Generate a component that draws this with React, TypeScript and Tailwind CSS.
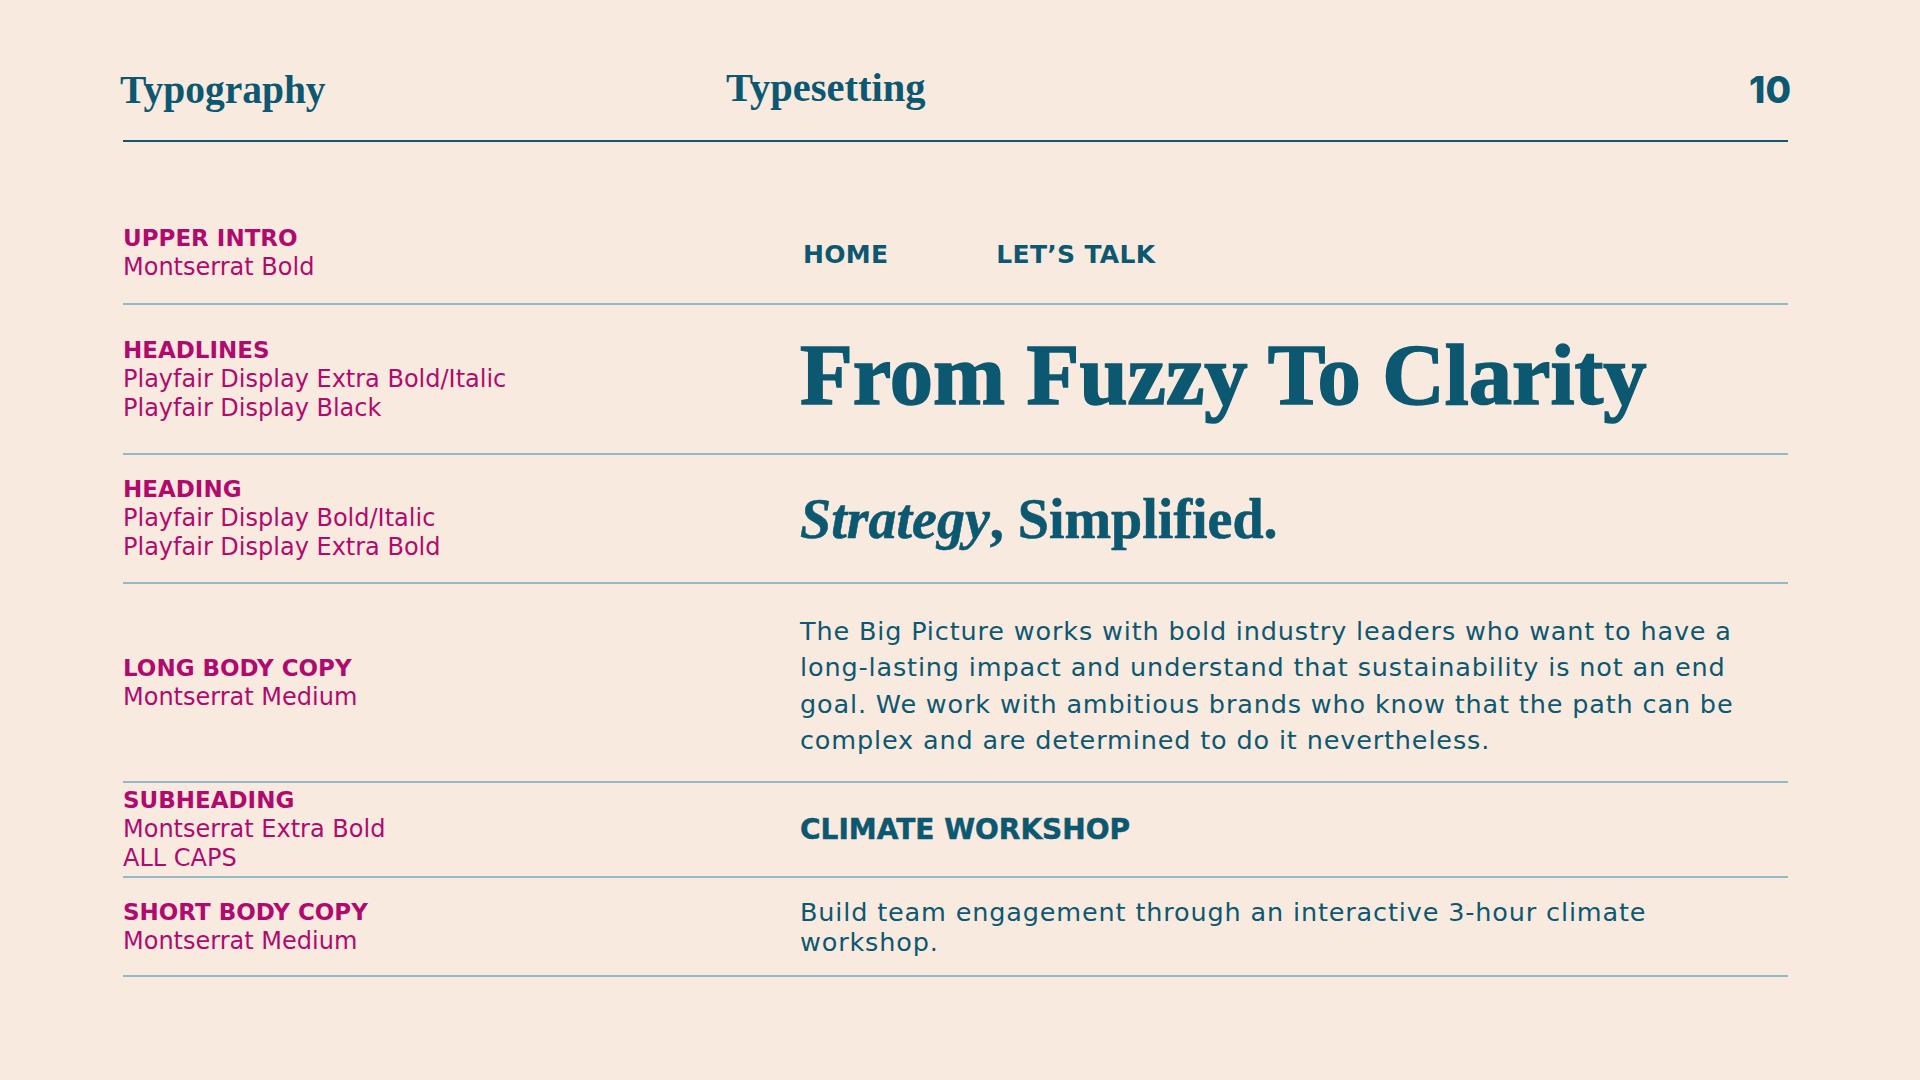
import React from "react";

const TEAL = "text-[#0c5870]";

function Label({ title, lines }: { title: string; lines: string[] }) {
  return (
    <div className="font-['DejaVu_Sans',sans-serif] text-[#b10a6e] leading-[29px]">
      <div className="text-[23px] font-bold">{title}</div>
      {lines.map((l) => (
        <div key={l} className="text-[24px]">
          {l}
        </div>
      ))}
    </div>
  );
}

function Row({
  h,
  title,
  lines,
  children,
}: {
  h: string;
  title: string;
  lines: string[];
  children: React.ReactNode;
}) {
  return (
    <div className={`flex items-center border-b-2 border-[#93b8c6] ${h}`}>
      <div className="w-[677px] shrink-0">
        <Label title={title} lines={lines} />
      </div>
      <div className="flex-1">{children}</div>
    </div>
  );
}

export default function App() {
  return (
    <div className="w-[1920px] h-[1080px] bg-[#f9eae0] overflow-hidden">
      <div className="ml-[123px] w-[1665px] pt-[70px]">
        <div className="flex items-baseline h-[70px]">
          <div
            className={`w-[606px] -ml-[3px] font-['Liberation_Serif',serif] font-bold text-[39.5px] leading-none ${TEAL}`}
          >
            Typography
          </div>
          <div
            className={`relative -top-[2px] font-['Liberation_Serif',serif] font-bold text-[40.5px] leading-none ${TEAL}`}
          >
            Typesetting
          </div>
          <div
            className={`ml-auto -mr-[3px] font-['Inter',sans-serif] font-extrabold text-[37px] leading-none ${TEAL}`}
          >
            10
          </div>
        </div>
        <div className="h-[2px] bg-[#0e5870]" />

        <div className="mt-[60px]">
          <Row h="h-[103px]" title="UPPER INTRO" lines={["Montserrat Bold"]}>
            <div
              className={`flex gap-[108px] pl-[3px] pt-[4px] font-['DejaVu_Sans',sans-serif] font-bold text-[25px] leading-[30px] tracking-[0.3px] ${TEAL}`}
            >
              <span>HOME</span>
              <span>LET’S TALK</span>
            </div>
          </Row>

          <Row
            h="h-[150px]"
            title="HEADLINES"
            lines={["Playfair Display Extra Bold/Italic", "Playfair Display Black"]}
          >
            <div
              className={`pb-[8px] font-['Liberation_Serif',serif] font-black text-[86.5px] leading-none [-webkit-text-stroke:1.6px_#0c5870] ${TEAL}`}
            >
              From Fuzzy To Clarity
            </div>
          </Row>

          <Row
            h="h-[129px]"
            title="HEADING"
            lines={["Playfair Display Bold/Italic", "Playfair Display Extra Bold"]}
          >
            <div
              className={`font-['Liberation_Serif',serif] font-bold text-[56px] leading-none [-webkit-text-stroke:0.6px_#0c5870] ${TEAL}`}
            >
              <span className="italic">Strategy</span>, Simplified.
            </div>
          </Row>

          <Row h="h-[199px]" title="LONG BODY COPY" lines={["Montserrat Medium"]}>
            <p
              className={`mt-[6px] max-w-[960px] font-['DejaVu_Sans',sans-serif] text-[25.5px] leading-[36.5px] tracking-[0.85px] ${TEAL}`}
            >
              The Big Picture works with bold industry leaders who want to have a
              long-lasting impact and understand that sustainability is not an end
              goal. We work with ambitious brands who know that the path can be
              complex and are determined to do it nevertheless.
            </p>
          </Row>

          <Row
            h="h-[95px]"
            title="SUBHEADING"
            lines={["Montserrat Extra Bold", "ALL CAPS"]}
          >
            <div
              className={`font-['DejaVu_Sans',sans-serif] font-bold text-[28px] leading-[32px] [-webkit-text-stroke:0.5px_#0c5870] ${TEAL}`}
            >
              CLIMATE WORKSHOP
            </div>
          </Row>

          <Row h="h-[99px]" title="SHORT BODY COPY" lines={["Montserrat Medium"]}>
            <p
              className={`max-w-[960px] font-['DejaVu_Sans',sans-serif] text-[25.5px] leading-[30px] tracking-[0.85px] ${TEAL}`}
            >
              Build team engagement through an interactive 3-hour climate workshop.
            </p>
          </Row>
        </div>
      </div>
    </div>
  );
}
